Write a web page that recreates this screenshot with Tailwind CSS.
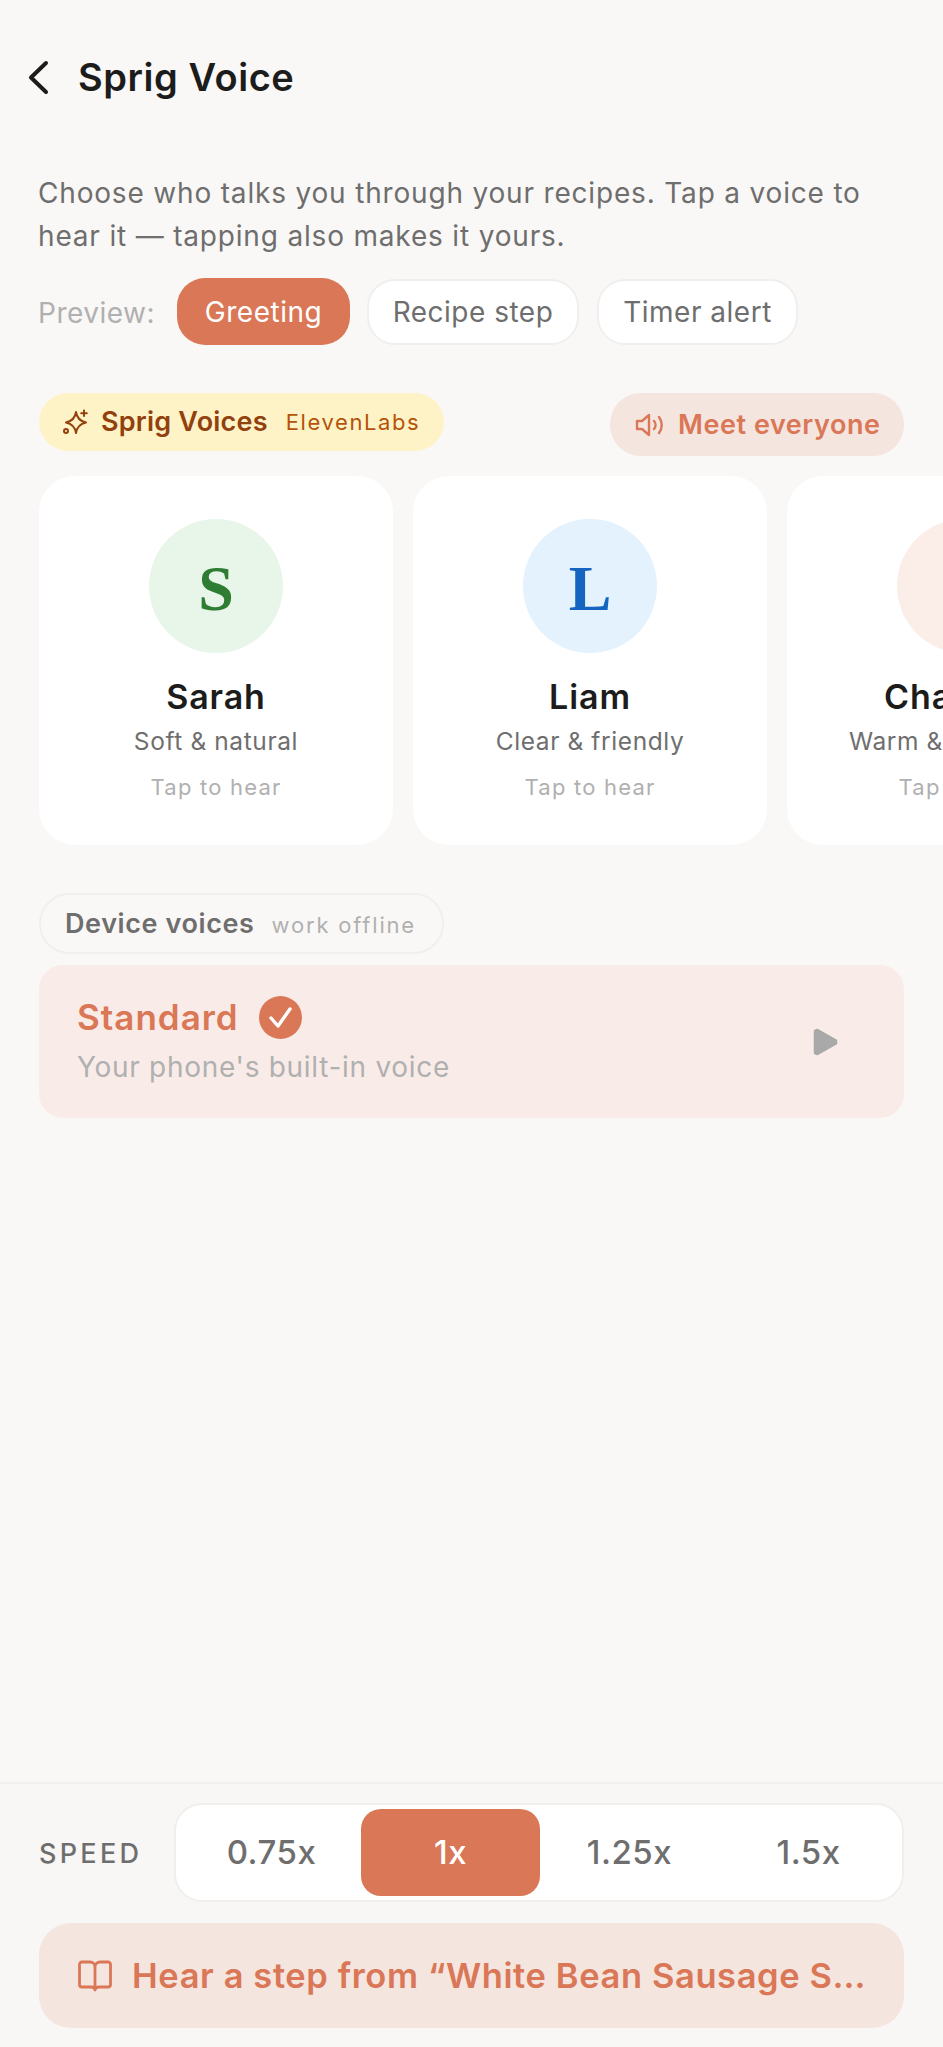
<!doctype html>
<html><head><meta charset="utf-8">
<script src="https://cdn.jsdelivr.net/npm/@tailwindcss/browser@4"></script></head>
<body class="m-0">
<div class="w-[943px] h-[2047px] overflow-hidden flex flex-col bg-[#faf8f6] font-['Inter','Noto_Sans',sans-serif]">
  <header class="h-[54px] mt-[50px] flex items-center pl-[28px] gap-[29px]">
    <svg class="w-[21px] h-[35px]" viewBox="0 0 21 35" fill="none" stroke="#1c1c1c" stroke-width="4" stroke-linecap="round" stroke-linejoin="round"><path d="M18 3 3 17.5 18 32"/></svg>
    <h1 class="text-[38px] leading-[54px] font-semibold text-[#1c1c1c] tracking-[0.55px]">Sprig Voice</h1>
  </header>
  <p class="mt-[68px] ml-[38px] w-[860px] text-[28px] leading-[43px] text-[#6e6e6e] tracking-[0.82px]">Choose who talks you through your recipes. Tap a voice to hear it — tapping also makes it yours.</p>
  <div class="mt-[20px] ml-[38px] h-[67px] flex items-center text-[28px] tracking-[0.5px]">
    <span class="w-[139px] text-[#b0b0b0] pt-[3px]">Preview:</span>
    <span class="w-[173px] h-[67px] rounded-[28px] bg-[#da7757] text-white flex items-center justify-center">Greeting</span>
    <span class="ml-[17px] w-[212px] h-[66px] rounded-[28px] bg-white border-2 border-[#f1efed] text-[#6e6e6e] flex items-center justify-center">Recipe step</span>
    <span class="ml-[18px] w-[201px] h-[66px] rounded-[28px] bg-white border-2 border-[#f1efed] text-[#6e6e6e] flex items-center justify-center">Timer alert</span>
  </div>
  <div class="mt-[48px] mx-[39px] flex justify-between items-start">
    <div class="w-[405px] h-[58px] rounded-[29px] bg-[#fef3c7] flex items-center pl-[23px]">
      <svg class="w-[26px] h-[26px]" viewBox="0 0 26 26" fill="none" stroke="#92400e" stroke-width="2" stroke-linecap="round" stroke-linejoin="round"><path d="M14 3c.8 6 3.500 9 10 10.500-6.500 1.500-9.200 4.500-10 10.500-.8-6-3.500-9-10-10.500 6.500-1.500 9.200-4.500 10-10.500Z"/><path d="M22 1.500v5.500M19.200 4.200h5.600"/><circle cx="4" cy="22" r="2"/></svg>
      <span class="ml-[13px] text-[27px] font-semibold text-[#92400e] tracking-[0.2px]">Sprig Voices</span>
      <span class="ml-[18px] text-[22px] text-[#b45309] tracking-[1.6px]">ElevenLabs</span>
    </div>
    <div class="w-[294px] h-[63px] rounded-[31px] bg-[#f4e5df] flex items-center pl-[25px]">
      <svg class="w-[30px] h-[26px]" viewBox="0 0 30 26" fill="none" stroke="#da7757" stroke-width="2.400" stroke-linecap="round" stroke-linejoin="round"><path d="M2 9v8h5l7 6V3L7 9Z"/><path d="M19 9a6 6 0 0 1 0 8M24 5a13 13 0 0 1 0 16"/></svg>
      <span class="ml-[13px] pt-[1px] text-[27px] font-semibold text-[#da7757] tracking-[0.55px] whitespace-nowrap">Meet everyone</span>
    </div>
  </div>
  <div class="mt-[20px] ml-[39px] flex gap-[20px] w-[904px] overflow-hidden">
    <div class="shrink-0 w-[354px] h-[369px] rounded-[36px] bg-white flex flex-col items-center pt-[43px]">
      <div class="w-[134px] h-[134px] pt-[5px] rounded-full bg-[#e8f5e9] flex items-center justify-center font-['Liberation_Serif',serif] font-bold text-[64px] text-[#2e7d32]">S</div>
      <div class="mt-[22px] text-[34px] leading-[44px] font-semibold text-[#1c1c1c] tracking-[0.9px]">Sarah</div>
      <div class="mt-[2px] text-[24.500px] leading-[40px] text-[#6e6e6e] tracking-[0.6px]">Soft &amp; natural</div>
      <div class="mt-[6px] text-[22px] leading-[40px] text-[#b0b0b0] tracking-[1.2px]">Tap to hear</div>
    </div>
    <div class="shrink-0 w-[354px] h-[369px] rounded-[36px] bg-white flex flex-col items-center pt-[43px]">
      <div class="w-[134px] h-[134px] pt-[5px] rounded-full bg-[#e3f2fd] flex items-center justify-center font-['Liberation_Serif',serif] font-bold text-[64px] text-[#1565c0]">L</div>
      <div class="mt-[22px] text-[34px] leading-[44px] font-semibold text-[#1c1c1c] tracking-[0.9px]">Liam</div>
      <div class="mt-[2px] text-[24.500px] leading-[40px] text-[#6e6e6e] tracking-[0.6px]">Clear &amp; friendly</div>
      <div class="mt-[6px] text-[22px] leading-[40px] text-[#b0b0b0] tracking-[1.2px]">Tap to hear</div>
    </div>
    <div class="shrink-0 w-[354px] h-[369px] rounded-[36px] bg-white flex flex-col items-center pt-[43px]">
      <div class="w-[134px] h-[134px] pt-[5px] rounded-full bg-[#fbede8] flex items-center justify-center font-['Liberation_Serif',serif] font-bold text-[64px] text-[#d0583a]">C</div>
      <div class="mt-[22px] text-[34px] leading-[44px] font-semibold text-[#1c1c1c] tracking-[0.9px]">Charlotte</div>
      <div class="mt-[2px] text-[24.500px] leading-[40px] text-[#6e6e6e] tracking-[0.6px] whitespace-nowrap">Warm &amp; reassuring</div>
      <div class="mt-[6px] text-[22px] leading-[40px] text-[#b0b0b0] tracking-[1.2px]">Tap to hear</div>
    </div>
  </div>
  <div class="mt-[48px] ml-[39px] w-[405px] h-[61px] rounded-[30px] border-2 border-[#f1efed] flex items-center pl-[24px]">
    <span class="pt-[2px] text-[27px] font-semibold text-[#6e6e6e] tracking-[0.6px]">Device voices</span>
    <span class="ml-[17px] pt-[4px] text-[22px] text-[#b0b0b0] tracking-[1.8px] whitespace-nowrap">work offline</span>
  </div>
  <div class="mt-[11px] mx-[39px] h-[153px] rounded-[24px] bg-[#f9ece8] flex items-center justify-between pl-[38px] pr-[66px]">
    <div class="pt-[2px]">
      <div class="flex items-center h-[43px]">
        <span class="text-[35px] font-semibold text-[#da7757] tracking-[1px]">Standard</span>
        <svg class="ml-[20px] w-[43px] h-[43px]" viewBox="0 0 43 43"><circle cx="21.500" cy="21.500" r="21.500" fill="#da7757"/><path d="m12 22 7 8 12-17" fill="none" stroke="#fff" stroke-width="3.400" stroke-linecap="round" stroke-linejoin="round"/></svg>
      </div>
      <div class="mt-[7px] text-[28px] leading-[43px] text-[#b0b0b0] tracking-[0.7px]">Your phone's built-in voice</div>
    </div>
    <svg class="w-[26px] h-[30px]" viewBox="0 0 26 30"><path d="M3 4v22l2.500 1 L24 16.500 v-3 L5.500 3Z" fill="#a9a9a9" stroke="#a9a9a9" stroke-width="2.500" stroke-linejoin="round"/></svg>
  </div>
  <div class="flex-1"></div>
  <footer class="h-[265px] border-t-2 border-[#f1efed] bg-[#f8f7f5] px-[39px] pt-[19px]">
    <div class="flex items-center justify-between">
      <span class="pt-[4px] text-[27px] font-medium text-[#6e6e6e] tracking-[3.300px]">SPEED</span>
      <div class="w-[730px] h-[99px] rounded-[28px] bg-white border-2 border-[#f1efed] flex items-center pl-[6px] pr-[4px] text-[33px] font-medium text-[#6e6e6e] tracking-[0.5px]">
        <span class="w-[179px] h-[87px] flex items-center justify-center">0.75x</span>
        <span class="w-[179px] h-[87px] rounded-[20px] bg-[#da7757] text-white flex items-center justify-center">1x</span>
        <span class="w-[179px] h-[87px] flex items-center justify-center">1.25x</span>
        <span class="w-[179px] h-[87px] flex items-center justify-center">1.5x</span>
      </div>
    </div>
    <div class="mt-[21px] h-[105px] rounded-[32px] bg-[#f4e5df] flex items-center pl-[39px] pr-[30px]">
      <svg class="shrink-0 w-[34px] h-[32px]" viewBox="0 0 34 32" fill="none" stroke="#da7757" stroke-width="2.800" stroke-linecap="round" stroke-linejoin="round"><path d="M17 7c0-3-2-5-5-5H4C2.500 2 1.500 3 1.500 4.500v20C1.500 26 2.500 27 4 27h9c2 0 4 1 4 3 0-2 2-3 4-3h9c1.500 0 2.500-1 2.500-2.500v-20C32.500 3 31.500 2 30 2h-8c-3 0-5 2-5 5v23"/></svg>
      <span class="ml-[20px] text-[34.500px] font-semibold text-[#da7757] tracking-[0.6px] truncate">Hear a step from “White Bean Sausage Stew”</span>
    </div>
  </footer>
</div>
</body></html>
